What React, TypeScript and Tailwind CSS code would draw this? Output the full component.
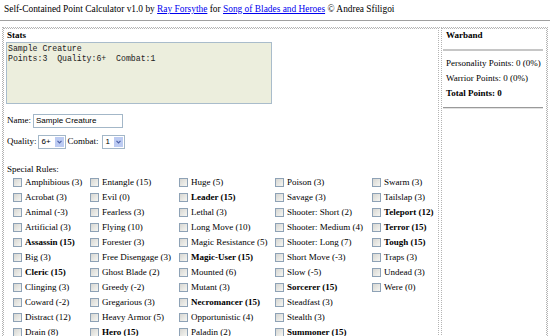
const rules: [string, boolean][][] = [
  [
    ["Amphibious (3)", false],
    ["Acrobat (3)", false],
    ["Animal (-3)", false],
    ["Artificial (3)", false],
    ["Assassin (15)", true],
    ["Big (3)", false],
    ["Cleric (15)", true],
    ["Clinging (3)", false],
    ["Coward (-2)", false],
    ["Distract (12)", false],
    ["Drain (8)", false],
  ],
  [
    ["Entangle (15)", false],
    ["Evil (0)", false],
    ["Fearless (3)", false],
    ["Flying (10)", false],
    ["Forester (3)", false],
    ["Free Disengage (3)", false],
    ["Ghost Blade (2)", false],
    ["Greedy (-2)", false],
    ["Gregarious (3)", false],
    ["Heavy Armor (5)", false],
    ["Hero (15)", true],
  ],
  [
    ["Huge (5)", false],
    ["Leader (15)", true],
    ["Lethal (3)", false],
    ["Long Move (10)", false],
    ["Magic Resistance (5)", false],
    ["Magic-User (15)", true],
    ["Mounted (6)", false],
    ["Mutant (3)", false],
    ["Necromancer (15)", true],
    ["Opportunistic (4)", false],
    ["Paladin (2)", false],
  ],
  [
    ["Poison (3)", false],
    ["Savage (3)", false],
    ["Shooter: Short (2)", false],
    ["Shooter: Medium (4)", false],
    ["Shooter: Long (7)", false],
    ["Short Move (-3)", false],
    ["Slow (-5)", false],
    ["Sorcerer (15)", true],
    ["Steadfast (3)", false],
    ["Stealth (3)", false],
    ["Summoner (15)", true],
  ],
  [
    ["Swarm (3)", false],
    ["Tailslap (3)", false],
    ["Teleport (12)", true],
    ["Terror (15)", true],
    ["Tough (15)", true],
    ["Traps (3)", false],
    ["Undead (3)", false],
    ["Were (0)", false],
  ],
];

const colWidths = ["w-[77px]", "w-[89px]", "w-[96px]", "w-[97px]", "w-[80px]"];

function Box() {
  return (
    <span className="w-[9px] h-[9px] shrink-0 border border-[#8ea2b6] bg-linear-to-br from-[#d6d6d2] to-[#f6f6f2]" />
  );
}

function Select({ value, width }: { value: string; width: string }) {
  return (
    <span
      className={`${width} h-[14px] flex items-stretch border border-[#a3b7c8] bg-white p-px`}
    >
      <span className="flex-1 pl-[2px] font-['Liberation_Sans',sans-serif] text-[8px] leading-[10px]">
        {value}
      </span>
      <span className="w-[9px] bg-[#bccbf2] flex items-center justify-center">
        <svg width="5" height="4" viewBox="0 0 5 4">
          <path d="M0.5 0.8 L2.5 2.8 L4.5 0.8" stroke="#4d61a8" strokeWidth="1.2" fill="none" />
        </svg>
      </span>
    </span>
  );
}

export default function App() {
  return (
    <div className="w-[550px] h-[336px] overflow-hidden bg-white text-black font-['Liberation_Serif',serif] text-[9px]">
      <div className="px-1 pt-[2px] text-[9.4px] leading-[14px] whitespace-nowrap">
        Self-Contained Point Calculator v1.0 by{" "}
        <a className="text-[#0000ee] underline">Ray Forsythe</a> for{" "}
        <a className="text-[#0000ee] underline">Song of Blades and Heroes</a> © Andrea Sfiligoi
      </div>
      <div className="mt-[4px] h-px bg-[#a0a0a0]" />
      <div className="mx-[2px] mt-[6px] flex gap-[2px] border border-dotted border-[#b4b4b4]">
        <div className="w-[436px] shrink-0 border border-dotted border-[#b4b4b4] pl-[2px] pb-2">
          <div className="ml-px font-bold leading-[12px]">Stats</div>
          <div className="mt-px w-[266px] h-[62px] border border-[#a9bccb] bg-[#eceedd] px-[1px] pt-px font-['Liberation_Mono',monospace] text-[8.2px] leading-[10px] text-[#222] whitespace-pre">
            {"Sample Creature\nPoints:3  Quality:6+  Combat:1"}
          </div>
          <div className="mt-[10px] ml-px flex items-center h-[14px]">
            <span>Name:</span>
            <span className="ml-[2px] w-[90px] h-[14px] border border-[#a3b7c8] bg-white pl-[2px] font-['Liberation_Sans',sans-serif] text-[8px] leading-[12px]">
              Sample Creature
            </span>
          </div>
          <div className="mt-[7px] ml-px flex items-center h-[14px]">
            <span>Quality:</span>
            <span className="ml-[1px]">
              <Select value="6+" width="w-[28px]" />
            </span>
            <span className="ml-[2px]">Combat:</span>
            <span className="ml-[3px]">
              <Select value="1" width="w-[23px]" />
            </span>
          </div>
          <div className="mt-[14px] ml-px leading-[12px]">Special Rules:</div>
          <div className="ml-[7px] flex">
            {rules.map((col, ci) => (
              <div key={ci} className={`${colWidths[ci]} shrink-0 flex flex-col`}>
                {col.map(([label, bold]) => (
                  <div key={label} className="h-[15px] flex items-center gap-[3px] whitespace-nowrap">
                    <Box />
                    <span className={bold ? "font-bold" : ""}>{label}</span>
                  </div>
                ))}
              </div>
            ))}
          </div>
        </div>
        <div className="flex-1 border border-dotted border-[#b4b4b4] self-stretch">
          <div className="pl-[4px] font-bold leading-[12px]">Warband</div>
          <div className="mt-[8px] ml-px mr-[3px] h-[2px] bg-[#c6c6c6]" />
          <div className="mt-[5px] pl-[4px] leading-[15px] whitespace-nowrap">
            <div>Personality Points: 0 (0%)</div>
            <div>Warrior Points: 0 (0%)</div>
            <div className="font-bold">Total Points: 0</div>
          </div>
          <div className="mt-[6px] ml-px mr-[3px] border-t border-[#9a9a9a] border-b border-b-[#e2e2e2]" />
        </div>
      </div>
    </div>
  );
}
